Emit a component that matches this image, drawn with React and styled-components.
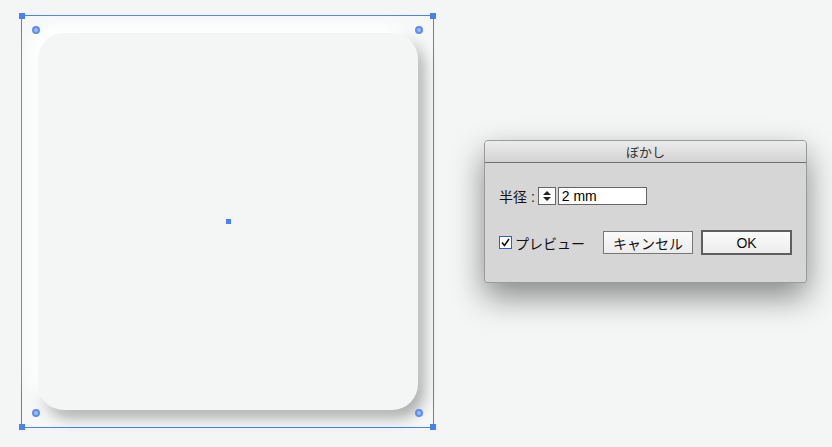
import React from 'react';
import styled, {createGlobalStyle, css} from "styled-components";

const GlobalStyle = createGlobalStyle`
  html, body {
    margin: 0;
    padding: 0;
    background: #f4f6f6;
    font-family: "Liberation Sans", "Noto Sans CJK JP", sans-serif;
  }
`

const blue = "#4a80f6";

const Page = styled.div`
  width: 832px;
  height: 447px;
  display: flex;
  align-items: flex-start;
  overflow: hidden;
  background: #f4f6f6;
`

const Artboard = styled.div`
  position: relative;
  margin: 15px 0 0 21px;
  width: 413px;
  height: 413px;
  border: 1px solid ${blue};
  box-sizing: border-box;
  padding: 17px 15px 0 16px;
  background: #f6f8f8;
`

const Shape = styled.div`
  width: 380px;
  height: 377px;
  border-radius: 26px;
  background: #f4f6f6;
  box-shadow: -8px -8px 14px #ffffff, 6px 8px 14px rgba(0,0,0,0.3);
`

const Handle = styled.div`
  position: absolute;
  width: 6px;
  height: 6px;
  background: ${blue};
  ${(p)=>p.top && css`top: -3px;`}
  ${(p)=>p.bottom && css`bottom: -3px;`}
  ${(p)=>p.left && css`left: -3px;`}
  ${(p)=>p.right && css`right: -3px;`}
`

const CenterPoint = styled.div`
  position: absolute;
  left: 204px;
  top: 203px;
  width: 5px;
  height: 5px;
  background: ${blue};
`

const Mark = styled.div`
  position: absolute;
  width: 4px;
  height: 4px;
  border: 2px solid #5d8cf6;
  border-radius: 50%;
  background: #9dbaf8;
  ${(p)=>p.top && css`top: 10px;`}
  ${(p)=>p.bottom && css`bottom: 10px;`}
  ${(p)=>p.left && css`left: 10px;`}
  ${(p)=>p.right && css`right: 10px;`}
`

const Dialog = styled.div`
  margin: 140px 0 0 50px;
  width: 323px;
  height: 143px;
  box-sizing: border-box;
  border: 1px solid #9a9a9a;
  border-radius: 4px 4px 3px 3px;
  background: #d6d6d6;
  box-shadow: 0 14px 32px rgba(0,0,0,0.45);
  display: flex;
  flex-direction: column;
  overflow: hidden;
`

const TitleBar = styled.div`
  height: 21px;
  flex: none;
  display: flex;
  align-items: center;
  justify-content: center;
  background: linear-gradient(#ececec, #d3d3d3);
  border-bottom: 1px solid #6e6e6e;
  font-size: 13px;
  color: #333;
`

const Body = styled.div`
  padding: 23px 14px 0 14px;
  display: flex;
  flex-direction: column;
  gap: 24px;
  font-size: 14px;
`

const Row = styled.div`
  display: flex;
  align-items: center;
`

const Label = styled.span`
  color: #111;
  margin-right: 3px;
`

const Spinner = styled.div`
  width: 18px;
  height: 18px;
  box-sizing: border-box;
  border: 1px solid #666;
  background: #fbfbfb;
  display: flex;
  flex-direction: column;
  align-items: center;
  justify-content: center;
  gap: 2px;
  margin-right: 2px;
`

const Arrow = styled.div`
  width: 0;
  height: 0;
  border-left: 4px solid transparent;
  border-right: 4px solid transparent;
  ${(p)=>p.down ? css`border-top: 4px solid #222;` : css`border-bottom: 4px solid #222;`}
`

const TextField = styled.div`
  width: 89px;
  height: 18px;
  box-sizing: border-box;
  border: 1px solid #666;
  background: #fff;
  color: #000;
  padding-left: 3px;
  line-height: 16px;
`

const Check = styled.div`
  width: 13px;
  height: 13px;
  box-sizing: border-box;
  border: 1px solid #2a5fd6;
  background: #fff;
  display: flex;
  align-items: center;
  justify-content: center;
  margin-right: 3px;
`

const Preview = styled.span`
  color: #111;
  width: 88px;
`

const Button = styled.div`
  height: 23px;
  box-sizing: border-box;
  border: 1px solid #777;
  background: linear-gradient(#fbfbfb, #ececec);
  display: flex;
  align-items: center;
  justify-content: center;
  color: #111;
  ${(p)=>p.primary && css`
    height: 25px;
    border: 2px solid #5f5f5f;
    margin-left: 8px;
  `}
  width: ${(p)=>p.w}px;
`

export default function App() {
  return (
    <Page>
      <GlobalStyle/>
      <Artboard>
        <Handle top left/>
        <Handle top right/>
        <Handle bottom left/>
        <Handle bottom right/>
        <Mark top left/>
        <Mark top right/>
        <Mark bottom left/>
        <Mark bottom right/>
        <Shape/>
        <CenterPoint/>
      </Artboard>
      <Dialog>
        <TitleBar>ぼかし</TitleBar>
        <Body>
          <Row>
            <Label>半径 :</Label>
            <Spinner><Arrow/><Arrow down/></Spinner>
            <TextField>2 mm</TextField>
          </Row>
          <Row>
            <Check>
              <svg width="9" height="9" viewBox="0 0 9 9">
                <path d="M1 4.5 L3.5 7.5 L8 1" fill="none" stroke="#111" strokeWidth="1.6"/>
              </svg>
            </Check>
            <Preview>プレビュー</Preview>
            <Button w={90}>キャンセル</Button>
            <Button primary w={91}>OK</Button>
          </Row>
        </Body>
      </Dialog>
    </Page>
  );
}
